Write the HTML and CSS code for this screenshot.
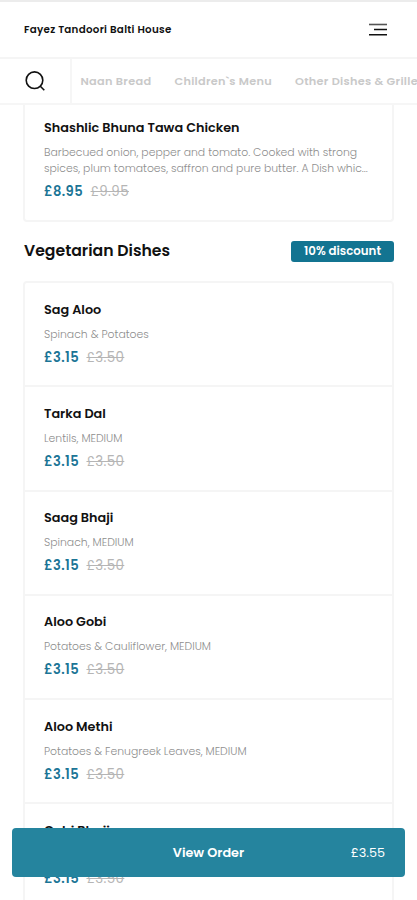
FILE: index.html
```html
<!DOCTYPE html>
<html lang="en">
<head>
    <meta charset="UTF-8">
    <meta name="viewport" content="width=device-width, initial-scale=1.0">
    <title>Fayez Tandoori Balti House</title>
    <link rel="stylesheet" href="styles.css">
</head>
<body>
    <header class="header">
        <h1>Fayez Tandoori Balti House</h1>
        <svg class="menu-icon" width="18" height="14" viewBox="0 0 18 14" fill="none" stroke="#111" stroke-width="1.6">
            <path stroke="#555" d="M0 1.5h18"/>
            <path d="M5 6.5h13M0 11.7h18"/>
        </svg>
    </header>

    <nav class="nav">
        <div class="search">
            <svg width="20" height="20" viewBox="0 0 20 20" fill="none" stroke="#111" stroke-width="1.6">
                <circle cx="9.5" cy="9.2" r="8.3"/>
                <path d="M15.3 15.2l4 4"/>
            </svg>
        </div>
        <div class="categories">
            <a>Naan Bread</a>
            <a>Children`s Menu</a>
            <a>Other Dishes &amp; Grilled</a>
        </div>
    </nav>

    <main class="menu">
        <div class="card card-top">
            <div class="item">
                <h3>Shashlic Bhuna Tawa Chicken</h3>
                <p class="desc">Barbecued onion, pepper and tomato. Cooked with strong<br>spices, plum tomatoes, saffron and pure butter. A Dish whic...</p>
                <p class="price">£8.95 <s>£9.95</s></p>
            </div>
        </div>

        <div class="section-title">
            <h2>Vegetarian Dishes</h2>
            <span class="discount">10% discount</span>
        </div>

        <div class="card">
            <div class="item">
                <h3>Sag Aloo</h3>
                <p class="desc">Spinach &amp; Potatoes</p>
                <p class="price">£3.15 <s>£3.50</s></p>
            </div>
            <div class="item">
                <h3>Tarka Dal</h3>
                <p class="desc">Lentils, MEDIUM</p>
                <p class="price">£3.15 <s>£3.50</s></p>
            </div>
            <div class="item">
                <h3>Saag Bhaji</h3>
                <p class="desc">Spinach, MEDIUM</p>
                <p class="price">£3.15 <s>£3.50</s></p>
            </div>
            <div class="item">
                <h3>Aloo Gobi</h3>
                <p class="desc">Potatoes &amp; Cauliflower, MEDIUM</p>
                <p class="price">£3.15 <s>£3.50</s></p>
            </div>
            <div class="item">
                <h3>Aloo Methi</h3>
                <p class="desc">Potatoes &amp; Fenugreek Leaves, MEDIUM</p>
                <p class="price">£3.15 <s>£3.50</s></p>
            </div>
            <div class="item">
                <h3>Gobi Bhaji</h3>
                <p class="desc">Cauliflower, MEDIUM</p>
                <p class="price">£3.15 <s>£3.50</s></p>
            </div>
        </div>
    </main>

    <button class="order">
        <span class="order-label">View Order</span>
        <span class="order-total">£3.55</span>
    </button>
</body>
</html>
```
FILE: styles.css
```css
* {
    box-sizing: border-box;
}
body {
    margin: 0;
    height: 900px;
    overflow: hidden;
    background: #fff;
    color: #111;
    font-family: Poppins, Inter, sans-serif;
}
h1, h2, h3, p {
    margin: 0;
}
.header {
    display: flex;
    justify-content: space-between;
    align-items: center;
    height: 59px;
    padding: 0 30px 0 24px;
    border-top: 2px solid #ececec;
    border-bottom: 2px solid #f5f5f5;
}
h1 {
    font-size: 10.3px;
    font-weight: 600;
    letter-spacing: 0.28px;
}
.menu-icon {
    margin-top: 1px;
}
.nav {
    display: flex;
    height: 46px;
    border-bottom: 2px solid #f6f6f6;
}
.search {
    flex: none;
    width: 72px;
    padding: 12px 0 0 25px;
    border-right: 2px solid #f6f6f6;
}
.categories {
    display: flex;
    align-items: center;
    gap: 23px;
    padding-left: 8.5px;
    overflow: hidden;
    white-space: nowrap;
    font-size: 11.3px;
    font-weight: 600;
    letter-spacing: 0.3px;
    color: #c9c9c9;
}
.menu {
    padding: 0 23px;
}
.card {
    border: 2px solid #f5f5f5;
    border-radius: 4px;
}
.card-top {
    border-top: none;
    border-radius: 0 0 4px 4px;
}
.item {
    height: 104.3px;
    padding: 16.5px 19px 0;
    border-bottom: 2px solid #f5f5f5;
}
.card-top .item {
    height: 115px;
    padding-top: 13px;
    border-bottom: none;
}
h3 {
    font-size: 12.8px;
    font-weight: 600;
    line-height: 20px;
}
.desc {
    margin-top: 7px;
    font-size: 10.85px;
    font-weight: 300;
    line-height: 16px;
    white-space: nowrap;
    color: #8e8e8e;
}
.price {
    margin-top: 5px;
    font-size: 13.1px;
    font-weight: 600;
    line-height: 20px;
    letter-spacing: 0.4px;
    color: #1b7596;
}
.price s {
    margin-left: 4px;
    font-size: 13.4px;
    font-weight: 400;
    color: #b5b5b5;
}
.section-title {
    display: flex;
    justify-content: space-between;
    align-items: center;
    height: 59px;
    padding-left: 1px;
}
h2 {
    margin-top: -2px;
    font-size: 15.7px;
    font-weight: 600;
}
.discount {
    width: 103px;
    border-radius: 3px;
    background: #137491;
    color: #fff;
    font-size: 11.8px;
    font-weight: 600;
    line-height: 21px;
    text-align: center;
}
.order {
    position: fixed;
    left: 12px;
    right: 12px;
    top: 828px;
    display: grid;
    grid-template-columns: 1fr auto 1fr;
    align-items: center;
    height: 49px;
    padding: 0 20px;
    border: none;
    border-radius: 4px;
    background: #25849e;
    color: #fff;
    font-family: inherit;
    font-size: 12.8px;
}
.order-label {
    grid-column: 2;
    font-weight: 600;
}
.order-total {
    justify-self: end;
    font-weight: 400;
}
```
